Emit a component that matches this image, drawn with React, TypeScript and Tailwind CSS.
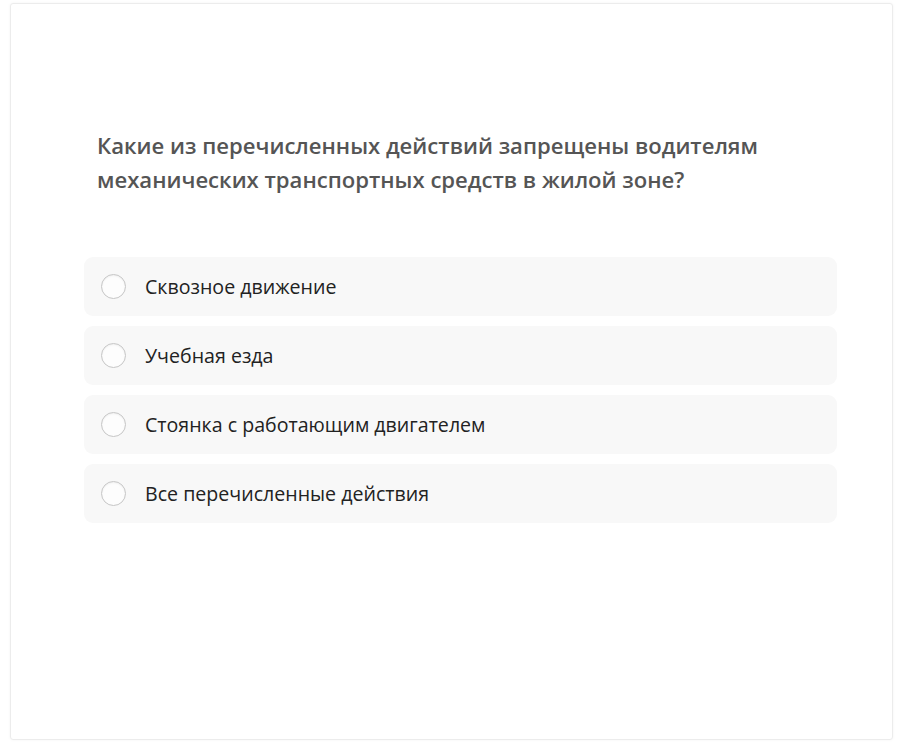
const options = [
  "Сквозное движение",
  "Учебная езда",
  "Стоянка с работающим двигателем",
  "Все перечисленные действия",
];

export default function App() {
  return (
    <main
      className="w-[898px] h-[744px] bg-white pt-[3px] pl-[10px]"
      style={{ fontFamily: '"Open Sans", "Noto Sans", sans-serif' }}
    >
      <div className="w-[883px] h-[737px] border border-[#ececec] rounded-[3px] shadow-[0_0_3px_rgba(0,0,0,0.05)] pl-[73px] pt-[124px]">
        {/* Question */}
        <h1 className="pl-[13px] text-[22.1px] leading-[34px] font-semibold text-[#555555]">
          Какие из перечисленных действий запрещены водителям
          <br />
          механических транспортных средств в жилой зоне?
        </h1>

        {/* Answers */}
        <div className="mt-[61px] w-[753px] flex flex-col gap-[10px]">
          {options.map((o) => (
            <label
              key={o}
              className="h-[59px] rounded-[9px] bg-[#f8f8f8] flex items-center pl-[17px] cursor-pointer"
            >
              <span className="w-[25px] h-[25px] rounded-full border border-[#c6c6c6] bg-[#fdfdfd] shadow-[inset_0_1px_2px_rgba(0,0,0,0.06)]" />
              <span className="ml-[19px] text-[19.6px] text-[#222222]">{o}</span>
            </label>
          ))}
        </div>
      </div>
    </main>
  );
}
